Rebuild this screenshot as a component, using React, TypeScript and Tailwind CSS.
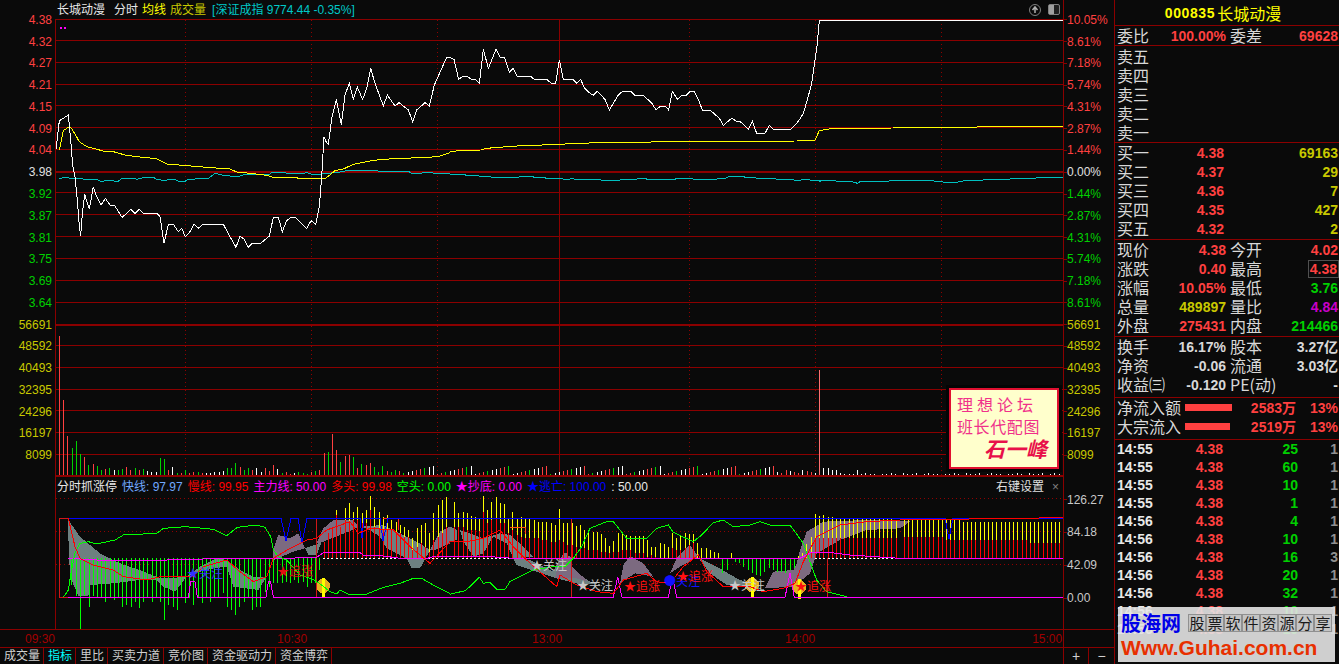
const RED = "#ff4040";
const GREEN = "#00d000";
const LINE = "#8b0000";

// chart points are read off the screenshot at 3x, so they get scaled back here
const pts = (a: number[], ox = 0, oy = 0) => {
  const out: string[] = [];
  for (let i = 0; i < a.length; i += 2) out.push(`${ox + a[i] / 3},${oy + a[i + 1] / 3}`);
  return out.join(" ");
};

const priceA = [166,465,178,362,190,355,205,345,212,420,218,495,225,530,232,600,238,680,242,708,247,640,254,583,262,610,268,628,280,560,290,590,303,615,316,595,330,615,345,618,366,652,380,640,393,628,405,640,418,628,430,640,470,640,480,650,492,730,505,673,520,673,535,695,545,685,556,710,570,695,582,673,595,685,608,673,670,673,690,710,708,742,720,708,733,718,745,742,757,730,782,730,808,708,820,652,835,652,847,695,860,662,873,652,885,652,920,685,933,662,947,673,958,620,965,530,972,410,978,425,985,433,996,350,1009,298,1024,375,1035,285,1048,250,1060,298,1072,262,1088,298,1100,265,1112,205,1125,250,1150,318,1162,285,1185,318,1197,308,1225,330,1238,365,1250,330,1275,308,1288,318,1303,255,1340,172,1350,172];
const priceB = [0,172,12,178,26,238,38,230,52,230,64,238,76,238,88,250,100,148,115,205,138,148,150,172,163,172,178,217,190,205,202,230,243,230,253,238,290,238,304,250,317,250,328,180,340,238,368,238,380,250,392,238,402,262,418,278,430,286,442,274,465,298,478,330,505,285,518,274,542,274,555,286,580,286,606,310,618,330,632,318,645,318,656,330,667,274,682,298,695,286,708,286,720,274,732,274,745,298,757,330,780,330,808,355,820,376,845,355,860,364,870,364,895,388,907,364,920,400,945,400,958,376,970,388,1022,388,1045,364,1060,340,1072,300,1085,250,1095,180,1102,130,1108,60,1839,60];
const avgA = [178,450,190,392,205,382,215,385,238,425,260,440,310,453,340,455,375,465,410,470,470,476,500,492,560,497,660,505,690,507,710,516,750,520,800,526,820,532,890,532,895,536,975,536,990,525,1005,512,1030,507,1060,493,1120,481,1180,476,1290,472,1320,468,1350,458];
const avgB = [0,456,30,451,92,450,110,445,145,442,185,439,235,436,320,434,372,430,510,427,700,425,1040,423,1095,420,1108,392,1130,388,1155,385,1330,384,1839,378];
const indexA = [178,537,190,532,230,537,245,535,255,540,290,538,305,546,315,541,355,544,365,535,400,535,410,538,435,532,460,532,470,538,490,541,525,538,535,544,555,544,565,538,625,535,645,520,665,525,690,528,720,528,730,525,770,523,810,522,815,517,855,517,860,520,900,522,920,518,945,525,965,522,1030,515,1040,511,1130,511,1135,514,1225,514,1235,520,1265,520,1270,517,1295,517,1300,520,1350,522];
const indexB = [0,523,45,523,48,526,85,526,88,529,120,529,125,532,205,532,210,529,248,529,252,532,285,532,288,535,335,535,340,538,358,538,365,535,375,538,450,538,455,541,508,541,512,538,560,538,565,535,587,535,590,538,675,538,680,535,725,535,730,538,800,538,805,535,825,535,840,529,880,529,885,532,915,532,920,535,975,535,980,538,1028,538,1033,541,1052,541,1055,538,1078,538,1082,541,1105,541,1110,544,1115,541,1155,541,1160,544,1195,544,1215,547,1222,550,1232,544,1315,544,1320,541,1350,541,1400,543,1425,540,1480,546,1510,549,1540,543,1600,540,1680,537,1839,531];

const priceLines = [19, 40, 62, 84, 105, 127, 149, 192, 214, 236, 258, 280, 302];
const volLines = [345, 367, 389, 410, 432, 454];
const dotted = [185, 311, 437, 689, 815, 941];

// first 83 volume bars, [height, colour]: r g w
const volHead = "139r 75r 39r 27g 34g 21g 18r 10g 11r 9g 5g 6r 7g 5w 5g 6g 8r 5r 7g 5r 6g 4w 3w 3w 17g 16g 5r 8w 2g 2r 5g 2r 3r 3g 2r 2w 2w 3w 3w 4w 7g 7g 12g 8r 5g 7g 5r 7w 3w 7r 4r 10r 6w 2g 3r 1r 2w 3g 2g 1g 3r 4g 5r 22r 23g 41r 25r 13g 19r 20r 18g 7r 11g 10r 12r 8g 3g 9g 4r 3g 5g 4r";
const volColor: Record<string, string> = { r: RED, g: GREEN, w: "#ffffff" };
const volBars = Array.from({ length: 240 }, (_, i) => {
  const x = Math.round(59 + 4.2 * i);
  const head = volHead.split(" ")[i];
  if (head) return { x, h: parseInt(head), c: volColor[head.slice(-1)] };
  if (i === 181) return { x: 819, h: 105, c: "#ff7070" };
  if (i > 181) {
    const near = [7, 7, 5, 5, 2, 1, 1, 1, 5, 1, 2, 1][i - 182];
    return { x, h: near ?? (i % 5 === 0 ? 0 : 1 + (i % 3 === 0 ? 1 : 0)), c: "#ffffff" };
  }
  if (i > 170) return { x, h: 2 + (i * 7) % 4, c: i % 3 ? RED : "#ffffff" };
  return { x, h: 1 + (i * 37) % 9, c: ["#ff4040", "#00d000", "#ffffff", "#ff4040", "#ffffff"][(i * 13) % 5] };
});

// green bars hanging below the 50 line: x, bottom
const greenBars = [214,345,227,378,241,476,253,375,266,410,278,378,291,385,304,380,316,395,329,385,341,390,354,385,367,410,379,405,392,410,404,395,417,415,430,395,442,385,455,395,468,385,480,395,493,450,505,405,518,410,530,420,543,380,555,400,568,385,580,405,593,380,605,400,618,380,630,395,643,380,655,385,668,370,680,410,693,420,706,435,718,410,731,395,743,385,756,420,769,410,781,410,794,365,806,350,819,340,832,340,845,340,857,335,870,340,882,330,895,340,908,335,920,350,933,340,945,340,958,300];
const greenBars2 = [817,308,830,300,855,275,868,280,880,290,893,300,906,310,918,315,931,318,943,305,956,295,968,300,981,305,994,305,1006,310,1019,300,1032,295];
// red and yellow bars above it: x, yellow top, red top
const upBars = [971,215,215,983,190,190,996,170,170,1009,120,135,1021,170,170,1034,115,150,1047,98,155,1060,125,150,1072,110,150,1085,130,160,1098,120,160,1111,78,120,1123,110,170,1136,125,180,1149,140,180,1161,135,180,1174,150,180,1187,155,190,1199,165,190,1212,170,200,1225,180,200,1237,205,240,1250,175,230,1262,165,220,1275,160,230,1288,190,245,1300,130,210,1313,105,200,1326,90,190,1338,80,170];
const upBars2 = [12,95,170,25,130,170,38,125,172,50,130,180,62,138,180,75,140,180,88,148,182,100,78,125,112,120,160,124,96,150,139,82,145,151,100,160,163,102,160,175,145,190,187,125,180,200,145,195,213,140,200,226,145,205,238,148,205,251,150,205,264,155,205,277,155,210,289,155,210,302,160,215,314,165,215,327,117,210,340,158,215,352,158,225,365,160,225,377,167,230,390,165,230,403,180,235,415,183,240,428,185,240,441,187,240,453,193,245,465,205,245,477,228,250,490,212,245,503,190,245,516,190,240,529,195,240,541,198,240,554,198,250,567,198,250,579,198,250,592,210,260,604,230,255,616,232,262,629,220,265,642,222,265,654,232,265,667,190,235,679,205,240,691,195,240,704,190,235,716,192,225,729,192,220,742,220,265,754,235,265,767,235,265,779,240,265,792,245,265,805,250,265,843,250,265,1045,258,265,1057,250,265,1069,222,265,1082,200,250,1095,133,205,1108,138,205,1120,135,205,1133,140,205,1146,142,205,1158,145,205,1171,145,205,1183,147,205,1196,147,205,1209,147,205,1222,147,205,1235,147,205,1248,147,205,1261,147,205,1273,147,205,1286,147,205,1299,147,205,1312,147,205,1324,147,205,1337,150,205];

const fastLine = [68, 518, 281, 518, 286, 541, 291, 518, 298, 518, 302, 543, 307, 518, 360, 518, 362, 538, 364, 518, 380, 518, 383, 541, 388, 518, 945, 518, 949, 539, 953, 518, 1063, 518];
const mainUp = [205,265,290,270,500,270,680,265,790,267,950,262,970,248,1080,248,1090,255,1150,258,1200,265,1275,267,1300,260,1350,258];
const mainUp2 = [0,260,120,260,190,265,370,265,1050,265,1085,247,1135,247,1200,255,1350,265,1839,265];
const mainLow = [205,382,565,382,572,335,585,335,592,382,798,382,805,335,812,335,820,382,1350,382];
const mainLow2 = [0,382,490,382,503,320,516,382,655,382,668,320,680,382,1005,382,1020,310,1033,382,1839,382];
const greenA = [190,382,205,360,213,310,225,250,240,220,265,215,290,222,345,210,370,195,470,190,490,175,555,170,580,172,640,178,680,197,712,172,770,165,795,172,812,200,820,240,835,260,860,270,900,315,940,328,965,345,990,365,1010,372,1020,360,1045,372,1100,372,1150,352,1200,340,1240,325,1265,325,1300,345,1350,370];
const greenB = [0,373,45,362,60,350,88,322,100,340,120,337,140,358,165,358,180,335,250,300,310,290,345,290,370,265,395,230,420,175,470,155,490,155,530,205,590,205,620,175,655,165,670,187,730,215,755,195,790,158,820,150,850,170,900,165,930,155,960,165,1020,165,1060,220,1100,330,1130,365,1190,380];
const redA = [205,145,225,230,240,265,280,285,340,300,370,320,440,330,480,320,510,320,580,320,610,290,680,270,720,305,760,335,800,320,820,265,870,235,920,210,950,205,980,180,1050,155,1075,190,1110,175,1180,180,1230,230,1290,280,1350,215];
const redB = [0,215,50,215,100,205,150,180,190,230,230,270,320,350,330,315,380,345,440,365,490,370,520,330,590,310,620,335,660,340,700,290,745,255,770,305,820,350,900,350,940,365,1000,355,1035,340,1060,275,1100,200,1170,165,1250,155,1350,150,1839,143];

const GRAY = "#6d8080";
const MAUVE = "#7c6a80";
const bandsA: [string, number[]][] = [
  [GRAY, [205,150,240,200,300,250,360,280,420,300,480,325,510,325,560,320,600,290,650,265,680,270,720,300,760,320,800,320,775,360,700,350,680,290,640,295,600,305,560,320,525,365,490,350,470,330,420,330,340,340,270,345,265,378,235,378,210,320,205,200]],
  [MAUVE, [820,240,835,195,870,205,895,190,915,235,880,245,820,270]],
  [GRAY, [915,235,945,225,965,215,950,255,925,255]],
  [MAUVE, [950,220,970,175,1000,150,1060,150,1075,170,1045,185,970,215]],
  [GRAY, [1080,170,1150,165,1200,190,1250,215,1290,240,1260,295,1235,295,1220,265,1160,235,1140,200,1100,175]],
  [MAUVE, [1290,240,1320,185,1350,170,1350,220,1305,240]],
];
const bandsB: [string, number[]][] = [
  [GRAY, [0,170,20,180,20,210,0,215]],
  [GRAY, [30,180,100,205,150,190,180,195,220,230,250,260,190,265,170,220,130,200,100,250,70,260,40,215]],
  [GRAY, [190,265,240,270,310,305,330,265,350,250,370,300,420,335,490,360,440,340,400,345,320,325,260,305,200,285]],
  [MAUVE, [330,265,345,248,365,265,365,290,415,335,380,325,315,325]],
  [MAUVE, [510,340,520,285,540,258,580,280,610,320,555,310,515,335]],
  [MAUVE, [660,310,680,265,720,225,745,260,690,290]],
  [GRAY, [750,265,800,290,860,325,945,360,830,345,780,310,750,270]],
  [MAUVE, [945,355,970,305,1030,300,1040,280,1050,240,1070,185,1120,155,1250,150,1380,152,1380,155,1350,175,1250,180,1170,210,1100,250,1080,310,1030,350]],
];

const marks = [
  { x: 187, y: 578, t: "★关注", c: "#3030ff" },
  { x: 277, y: 576, t: "★追涨", c: "#e01010" },
  { x: 531, y: 570, t: "★关注", c: "#c8c8c8" },
  { x: 577, y: 590, t: "★关注", c: "#c8c8c8" },
  { x: 624, y: 591, t: "★追涨", c: "#ff1010" },
  { x: 664, y: 586, t: "●关注", c: "#1010ff" },
  { x: 677, y: 581, t: "★追涨", c: "#ff1010" },
  { x: 729, y: 590, t: "★关注", c: "#c8c8c8" },
  { x: 795, y: 591, t: "★追涨", c: "#ff1010" },
];

const coins = [[323, 586], [752, 585], [799, 587]];

function PriceChart() {
  return (
    <svg width={1007} height={307} viewBox="56 19 1007 307" shapeRendering="crispEdges" className="block">
      {priceLines.map((y) => <rect key={y} x={56} y={y} width={1007} height={1} fill={LINE} />)}
      <rect x={56} y={171} width={1007} height={2} fill={LINE} />
      <rect x={56} y={324} width={1007} height={2} fill={LINE} />
      <rect x={559} y={19} width={1} height={307} fill={LINE} />
      {dotted.map((x) => <line key={x} x1={x + 0.5} x2={x + 0.5} y1={20} y2={324} stroke="#900000" strokeDasharray="1 3" />)}
      <rect x={60} y={27} width={2} height={2} fill="#ff00ff" />
      <rect x={64} y={27} width={2} height={2} fill="#ff00ff" />
      <polyline points={pts(indexA)} fill="none" stroke="#00c0c0" />
      <polyline points={pts(indexB, 450)} fill="none" stroke="#00c0c0" />
      <polyline points={pts(avgA)} fill="none" stroke="#ffff00" />
      <polyline points={pts(avgB, 450)} fill="none" stroke="#ffff00" />
      <polyline points={pts(priceA)} fill="none" stroke="#ffffff" />
      <polyline points={pts(priceB, 450)} fill="none" stroke="#ffffff" />
    </svg>
  );
}

function VolumeChart() {
  return (
    <svg width={1007} height={151} viewBox="56 326 1007 151" shapeRendering="crispEdges" className="block">
      {volLines.map((y) => <rect key={y} x={56} y={y} width={1007} height={1} fill={LINE} />)}
      <rect x={559} y={326} width={1} height={150} fill={LINE} />
      {dotted.map((x) => <line key={x} x1={x + 0.5} x2={x + 0.5} y1={326} y2={475} stroke="#900000" strokeDasharray="1 3" />)}
      {volBars.map((b, i) => <rect key={i} x={b.x} y={475 - b.h} width={1} height={b.h} fill={b.c} />)}
      <rect x={56} y={475} width={1007} height={2} fill={LINE} />
    </svg>
  );
}

function Coin({ x, y }: { x: number; y: number }) {
  return (
    <g>
      <circle cx={x} cy={y} r={7} fill="#e8b020" />
      <rect x={x - 1} y={y - 8} width={3} height={20} fill="#ffff00" />
    </g>
  );
}

function IndicatorChart() {
  const ups: { x: number; yt: number; rt: number }[] = [];
  for (let i = 0; i < upBars.length; i += 3) ups.push({ x: upBars[i] / 3, yt: 470 + upBars[i + 1] / 3, rt: 470 + upBars[i + 2] / 3 });
  for (let i = 0; i < upBars2.length; i += 3) ups.push({ x: 450 + upBars2[i] / 3, yt: 470 + upBars2[i + 1] / 3, rt: 470 + upBars2[i + 2] / 3 });
  for (let x = 904; x < 1063; x += 4.2) ups.push({ x, yt: x < 960 ? 520 : 522, rt: x < 945 ? 537 : x < 1027 ? 540 : 543 });
  const downs: [number, number][] = [];
  for (let i = 0; i < greenBars.length; i += 2) downs.push([greenBars[i] / 3, 470 + greenBars[i + 1] / 3]);
  for (let i = 0; i < greenBars2.length; i += 2) downs.push([450 + greenBars2[i] / 3, 470 + greenBars2[i + 1] / 3]);

  return (
    <svg width={1007} height={133} viewBox="56 496 1007 133" shapeRendering="crispEdges" className="block">
      {[498, 531, 564].map((y) => <line key={y} x1={56} x2={1063} y1={y + 0.5} y2={y + 0.5} stroke="#900000" strokeDasharray="1 3" />)}
      {bandsA.map(([c, p], i) => <polygon key={i} points={pts(p, 0, 470)} fill={c} />)}
      {bandsB.map(([c, p], i) => <polygon key={i} points={pts(p, 450, 470)} fill={c} />)}
      {coins.map(([x, y]) => <Coin key={x} x={x} y={y} />)}
      {ups.map((b, i) => (
        <g key={i}>
          <rect x={Math.round(b.x)} y={b.yt} width={1} height={Math.max(b.rt - b.yt, 0)} fill="#ffff00" />
          <rect x={Math.round(b.x)} y={b.rt} width={1} height={Math.max(558 - b.rt, 0)} fill="#ff0000" />
        </g>
      ))}
      <line x1={323} x2={600} y1={558.5} y2={558.5} stroke="#ffffff" strokeDasharray="2 2.2" />
      <line x1={815} x2={905} y1={558.5} y2={558.5} stroke="#ffffff" strokeDasharray="2 2.2" />
      {downs.map(([x, b], i) => <rect key={i} x={Math.round(x)} y={558} width={1} height={b - 558} fill="#00ff00" />)}
      <polyline points="68,518 59,518 59,597 68,597" fill="none" stroke="#d01818" />
      {[[316, 518], [571, 518], [827, 558]].map(([x, y]) => <rect key={x} x={x} y={y} width={1} height={597 - y} fill="#d01818" />)}
      <polyline points="383,518 398,518 398,530" fill="none" stroke="#ff2020" />
      <polyline points="510,527 525,527 525,534" fill="none" stroke="#ff5010" />
      <polyline points={fastLine.join(" ")} fill="none" stroke="#0000ff" strokeWidth={1} />
      <polyline points={pts(mainUp, 0, 470)} fill="none" stroke="#ff00ff" />
      <polyline points={pts(mainUp2, 450, 470)} fill="none" stroke="#ff00ff" />
      <polyline points={pts(mainLow, 0, 470)} fill="none" stroke="#ff00ff" />
      <polyline points={pts(mainLow2, 450, 470)} fill="none" stroke="#ff00ff" />
      <polyline points={pts(greenA, 0, 470)} fill="none" stroke="#00ff00" />
      <polyline points={pts(greenB, 450, 470)} fill="none" stroke="#00ff00" />
      <polyline points={pts(redA, 0, 470)} fill="none" stroke="#ff0000" />
      <polyline points={pts(redB, 450, 470)} fill="none" stroke="#ff0000" />
      {marks.map((m) => (
        <text key={m.x} x={m.x} y={m.y} fontSize={12} fill={m.c} fontFamily="'Noto Sans CJK SC', sans-serif" shapeRendering="auto">{m.t}</text>
      ))}
    </svg>
  );
}

const leftPrices = [
  ["4.38", "text-[#ff4040]"], ["4.32", "text-[#ff4040]"], ["4.27", "text-[#ff4040]"], ["4.21", "text-[#ff4040]"],
  ["4.15", "text-[#ff4040]"], ["4.09", "text-[#ff4040]"], ["4.04", "text-[#ff4040]"], ["3.98", "text-[#e0e0e0]"],
  ["3.92", "text-[#00d000]"], ["3.87", "text-[#00d000]"], ["3.81", "text-[#00d000]"], ["3.75", "text-[#00d000]"],
  ["3.69", "text-[#00d000]"], ["3.64", "text-[#00d000]"],
];
const rightPcts = [
  ["10.05%", "text-[#ff4040]"], ["8.61%", "text-[#ff4040]"], ["7.18%", "text-[#ff4040]"], ["5.74%", "text-[#ff4040]"],
  ["4.31%", "text-[#ff4040]"], ["2.87%", "text-[#ff4040]"], ["1.44%", "text-[#ff4040]"], ["0.00%", "text-[#e0e0e0]"],
  ["1.44%", "text-[#00d000]"], ["2.87%", "text-[#00d000]"], ["4.31%", "text-[#00d000]"], ["5.74%", "text-[#00d000]"],
  ["7.18%", "text-[#00d000]"], ["8.61%", "text-[#00d000]"],
];
const vols = ["56691", "48592", "40493", "32395", "24296", "16197", "8099"];

function RightLabel({ text, cls, tall }: { text: string; cls: string; tall?: boolean }) {
  return (
    <div className={`flex items-center ${tall ? "h-[32.9px]" : "h-[21.77px]"}`}>
      <span className="h-px w-[3px] bg-[#8b0000]" />
      <span className={`text-xs ${cls}`}>{text}</span>
    </div>
  );
}

const label16 = "text-base leading-[19px] text-[#d8d8d8] font-['Noto_Sans_CJK_SC',sans-serif]";

function QuoteRow(props: { a: string; av: string; ac: string; b: string; bv: string; bc: string; boxed?: boolean }) {
  return (
    <div className="flex h-[19px] items-center pl-[2px] pr-px">
      <span className={`w-[48px] shrink-0 whitespace-nowrap ${label16}`}>{props.a}</span>
      <span className={`w-[61px] whitespace-nowrap text-right text-sm font-bold ${props.ac}`}>{props.av}</span>
      <span className={`ml-[4px] w-[42px] shrink-0 whitespace-nowrap ${label16}`}>{props.b}</span>
      <span className={`flex-1 whitespace-nowrap text-right text-sm font-bold ${props.bc}`}>
        {props.boxed ? <span className="-mr-px border border-[#505050] px-px">{props.bv}</span> : props.bv}
      </span>
    </div>
  );
}

function BookRow({ name, price, vol }: { name: string; price?: string; vol?: string }) {
  return (
    <div className="flex h-[19px] items-center pl-[2px] pr-px">
      <span className={`w-[48px] shrink-0 ${label16}`}>{name}</span>
      <span className="w-[59px] text-right text-sm font-bold text-[#ff4040]">{price}</span>
      <span className="flex-1 text-right text-sm font-bold text-[#c8c800]">{vol}</span>
    </div>
  );
}

const trades: [string, string, string][] = [
  ["14:55", "25", "1"], ["14:55", "60", "1"], ["14:55", "10", "1"], ["14:55", "1", "1"], ["14:56", "4", "1"],
  ["14:56", "10", "1"], ["14:56", "16", "3"], ["14:56", "20", "1"], ["14:56", "32", "1"], ["14:56", "10", "1"],
  ["14:56", "10", "1"],
];

const tabs = ["成交量", "指标", "里比", "买卖力道", "竞价图", "资金驱动力", "资金博弈"];

function SidePanel() {
  return (
    <div className="relative flex h-[664px] w-[225px] shrink-0 flex-col overflow-hidden border-l border-[#8b0000]">
      <div className="flex h-[26px] items-center justify-center border-b border-[#8b0000] pr-[8px] text-[#ffff00]">
        <span className="text-sm font-bold tracking-[0.6px]">000835</span>
        <span className="ml-[2px] text-base font-['Noto_Sans_CJK_SC',sans-serif]">长城动漫</span>
      </div>
      <div className="h-[20px] border-b border-[#8b0000]">
        <QuoteRow a="委比" av="100.00%" ac="text-[#ff4040]" b="委差" bv="69628" bc="text-[#ff4040]" />
      </div>
      <div className="h-[97px] border-b border-[#8b0000] pt-px">
        {["卖五", "卖四", "卖三", "卖二", "卖一"].map((n) => <BookRow key={n} name={n} />)}
      </div>
      <div className="h-[97px] border-b border-[#8b0000]">
        <BookRow name="买一" price="4.38" vol="69163" />
        <BookRow name="买二" price="4.37" vol="29" />
        <BookRow name="买三" price="4.36" vol="7" />
        <BookRow name="买四" price="4.35" vol="427" />
        <BookRow name="买五" price="4.32" vol="2" />
      </div>
      <div className="h-[97px] border-b border-[#8b0000]">
        <QuoteRow a="现价" av="4.38" ac="text-[#ff4040]" b="今开" bv="4.02" bc="text-[#ff4040]" />
        <QuoteRow a="涨跌" av="0.40" ac="text-[#ff4040]" b="最高" bv="4.38" bc="text-[#ff4040]" boxed />
        <QuoteRow a="涨幅" av="10.05%" ac="text-[#ff4040]" b="最低" bv="3.76" bc="text-[#00d000]" />
        <QuoteRow a="总量" av="489897" ac="text-[#c8c800]" b="量比" bv="4.84" bc="text-[#c800c8]" />
        <QuoteRow a="外盘" av="275431" ac="text-[#ff4040]" b="内盘" bv="214466" bc="text-[#00d000]" />
      </div>
      <div className="h-[61px] border-b border-[#8b0000]">
        <QuoteRow a="换手" av="16.17%" ac="text-[#d8d8d8]" b="股本" bv="3.27亿" bc="text-[#d8d8d8]" />
        <QuoteRow a="净资" av="-0.06" ac="text-[#d8d8d8]" b="流通" bv="3.03亿" bc="text-[#d8d8d8]" />
        <QuoteRow a="收益㈢" av="-0.120" ac="text-[#d8d8d8]" b="PE(动)" bv="-" bc="text-[#d8d8d8]" />
      </div>
      <div className="h-[42px] border-b border-[#8b0000]">
        {[["净流入额", "w-[47px]", "2583万"], ["大宗流入", "w-[45px]", "2519万"]].map(([n, w, v]) => (
          <div key={n} className="flex h-[19px] items-center pl-[2px] pr-px">
            <span className={`w-[68px] shrink-0 ${label16}`}>{n}</span>
            <span className={`h-[7px] bg-[#ff4040] ${w}`} />
            <span className="flex-1 text-right text-sm font-bold text-[#ff4040]">{v}</span>
            <span className="w-[42px] text-right text-sm font-bold text-[#ff4040]">13%</span>
          </div>
        ))}
      </div>
      <div>
        {trades.map(([t, v, n], i) => (
          <div key={i} className="flex h-[18px] items-center pl-[2px] text-sm font-bold">
            <span className="w-[70px] text-[#e8e8e8]">{t}</span>
            <span className="w-[36px] text-right text-[#ff4040]">4.38</span>
            <span className="w-[75px] text-right text-[#00d000]">{v}</span>
            <span className="w-[40px] text-right text-[#909090]">{n}</span>
          </div>
        ))}
      </div>
      {/* watermark stamped over the tick list */}
      <div className="absolute left-[3px] top-[607px] flex h-[55px] w-[217px] flex-col bg-[#e4e4e4]/90 px-[3px] pt-[3px]">
        <div className="flex h-[26px] items-center">
          <span className="w-[68px] text-xl leading-none font-bold text-[#0000e8] font-['Noto_Sans_CJK_SC',sans-serif]">股海网</span>
          <div className="flex">
            {"股票软件资源分享".split("").map((c, i) => (
              <span key={i} className="flex h-[18px] w-[18px] items-center justify-center border border-[#909090] bg-[#c4c4c4] text-[15px] text-[#1a1a1a] font-['Noto_Sans_CJK_SC',sans-serif]">{c}</span>
            ))}
          </div>
        </div>
        <div className="whitespace-nowrap text-[21px] leading-[24px] font-bold text-[#e83000]">Www.Guhai.com.cn</div>
      </div>
    </div>
  );
}

export default function App() {
  return (
    <div className="flex h-[664px] w-[1339px] overflow-hidden bg-[#0a0a0a] font-['Liberation_Sans','Noto_Sans_CJK_SC',sans-serif] text-xs">
      <div className="flex w-[1114px] shrink-0 flex-col">
        <div className="flex h-[629px]">
          {/* left axis */}
          <div className="w-[55px] shrink-0 pt-[9px]">
            {leftPrices.map(([v, c]) => <div key={v} className={`flex h-[21.77px] items-center justify-end pr-[3px] ${c}`}>{v}</div>)}
            {vols.map((v) => <div key={v} className="flex h-[21.77px] items-center justify-end pr-[3px] text-[#c8c800]">{v}</div>)}
          </div>

          <div className="flex w-[1008px] shrink-0 flex-col">
            <div className="flex h-[19px] items-center justify-between pl-[2px] pr-[3px]">
              <div className="flex items-center whitespace-nowrap">
                <span className="text-[#e8e8e8]">长城动漫</span>
                <span className="ml-[9px] text-[#e8e8e8]">分时</span>
                <span className="ml-[4px] text-[#ffff00]">均线</span>
                <span className="ml-[4px] text-[#c8c800]">成交量</span>
                <span className="ml-[6px] text-[#00c8c8]">[深证成指 9774.44 -0.35%]</span>
              </div>
              <div className="flex items-center gap-[7px]">
                <svg width="12" height="12" viewBox="0 0 12 12" fill="none" stroke="#808080">
                  <circle cx="6" cy="6" r="5.5" />
                  <path d="M3.5 6 L6 3 L8.5 6 M6 3.5 V9" strokeWidth="1.5" stroke="#b0b0b0" />
                </svg>
                <svg width="12" height="11" viewBox="0 0 12 11">
                  <rect x="0.5" y="0.5" width="11" height="10" rx="1.5" fill="#202020" stroke="#808080" />
                  <rect x="1" y="1" width="5" height="9" fill="#a0a0a0" />
                </svg>
              </div>
            </div>
            <div className="flex-1 border-l border-[#8b0000]">
              <PriceChart />
              <VolumeChart />
              <div className="flex h-[19px] items-center gap-[5px] whitespace-nowrap pl-px pr-[4px]">
                <span className="text-[#e8e8e8]">分时抓涨停</span>
                <span className="text-[#70a8ff]">快线: 97.97</span>
                <span className="text-[#ff0000]">慢线: 99.95</span>
                <span className="text-[#ff00ff]">主力线: 50.00</span>
                <span className="text-[#ff0000]">多头: 99.98</span>
                <span className="text-[#00ff00]">空头: 0.00</span>
                <span className="text-[#ff00ff]">★抄底: 0.00</span>
                <span className="text-[#0000ff]">★逃亡: 100.00</span>
                <span className="text-[#e8e8e8]">: 50.00</span>
                <span className="ml-auto text-[#e0e0e0]">右键设置</span>
                <span className="ml-[3px] text-[#808080]">×</span>
              </div>
              <IndicatorChart />
            </div>
          </div>

          {/* right axis */}
          <div className="w-[51px] shrink-0 border-l border-[#8b0000] pt-[9px]">
            {rightPcts.map(([v, c], i) => <RightLabel key={i} text={v} cls={c} />)}
            {vols.map((v) => <RightLabel key={v} text={v} cls="text-[#c8c800]" />)}
            <div className="mt-[17px]">
              {["126.27", "84.18", "42.09", "0.00"].map((v) => <RightLabel key={v} text={v} cls="text-[#c8c8c8]" tall />)}
            </div>
          </div>
        </div>

        {/* time axis */}
        <div className="flex h-[18px] items-center border-t border-[#8b0000] text-[#a00000]">
          <span className="ml-[25px]">09:30</span>
          <span className="ml-[222px]">10:30</span>
          <span className="ml-[225px]">13:00</span>
          <span className="ml-[223px]">14:00</span>
          <span className="ml-[217px]">15:00</span>
          <span className="ml-auto h-full w-[51px] border-l border-[#8b0000]" />
        </div>

        {/* tabs */}
        <div className="flex h-[17px] items-stretch border-t border-[#8b0000] text-[#d0d0d0]">
          {tabs.map((t, i) => (
            <span key={t} className={`flex items-center border-r border-[#8b0000] pl-[4px] pr-[3px] ${i === 1 ? "text-[#00ffff]" : ""}`}>{t}</span>
          ))}
          <span className="ml-auto flex w-[26px] items-center justify-center border-l border-r border-[#8b0000] text-sm">+</span>
          <span className="flex w-[25px] items-center justify-center text-sm">−</span>
        </div>
      </div>

      <SidePanel />

      {/* signature card sitting over the volume panel */}
      <div className="absolute left-[946px] top-[385px] border-[3px] border-[#050505]">
        <div className="flex h-[81px] w-[110px] flex-col border-2 border-[#e01030] bg-[#ffffcc] pl-[6px] pt-[2px] text-[#f0308a]">
          <span className="whitespace-nowrap text-[16px] leading-[24px] tracking-[4px] font-['Noto_Sans_CJK_SC',sans-serif]">理想论坛</span>
          <span className="whitespace-nowrap text-[16px] leading-[20px] tracking-[0.6px] font-['Noto_Sans_CJK_SC',sans-serif]">班长代配图</span>
          <span className="whitespace-nowrap pl-[27px] text-[21px] leading-[24px] font-bold italic text-[#e8104a] font-['Noto_Sans_CJK_SC',sans-serif]">石一峰</span>
        </div>
      </div>
    </div>
  );
}
